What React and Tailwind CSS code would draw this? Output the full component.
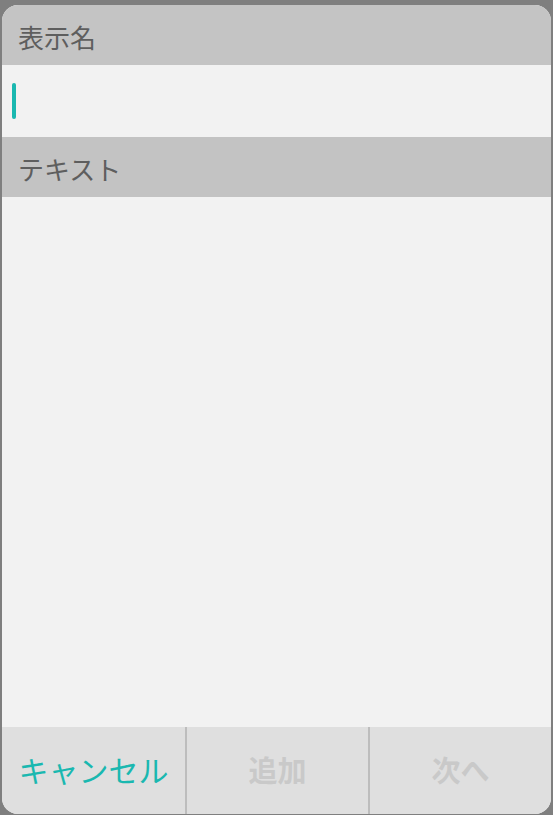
export default function App() {
  const font = { fontFamily: '"Noto Sans CJK JP", "Noto Sans", sans-serif' };
  return (
    <div className="h-[815px] w-[553px] bg-[#7f7f7f] pt-[5px] pl-[2px] pr-[2px] pb-[1px]" style={font}>
      <div className="flex h-full flex-col overflow-hidden rounded-[16px] bg-[#f2f2f2]">
        <div className="flex h-[60px] shrink-0 items-center bg-[#c4c4c4] pl-4 pt-[3px] text-[26px] text-[#5e5e5e]">
          表示名
        </div>
        <div className="flex h-[72px] shrink-0 items-center pl-[10px]">
          <div className="h-[36px] w-[4px] rounded-full bg-[#1ab8b0]" />
        </div>
        <div className="flex h-[60px] shrink-0 items-center bg-[#c3c3c3] pl-4 pt-[3px] text-[26px] text-[#5e5e5e]">
          テキスト
        </div>
        <div className="flex-1" />
        <div className="grid h-[87px] shrink-0 grid-cols-3 bg-[#dfdfdf]">
          <button className="flex items-center justify-center pb-[2px] text-[30px] text-[#1ab8b0]">
            キャンセル
          </button>
          <button className="flex items-center justify-center border-l-2 border-[#bdbdbd] pb-[2px] text-[29px] font-bold text-[#c9c9c9]">
            追加
          </button>
          <button className="flex items-center justify-center border-l-2 border-[#bdbdbd] pb-[2px] text-[29px] font-bold text-[#c9c9c9]">
            次へ
          </button>
        </div>
      </div>
    </div>
  );
}
